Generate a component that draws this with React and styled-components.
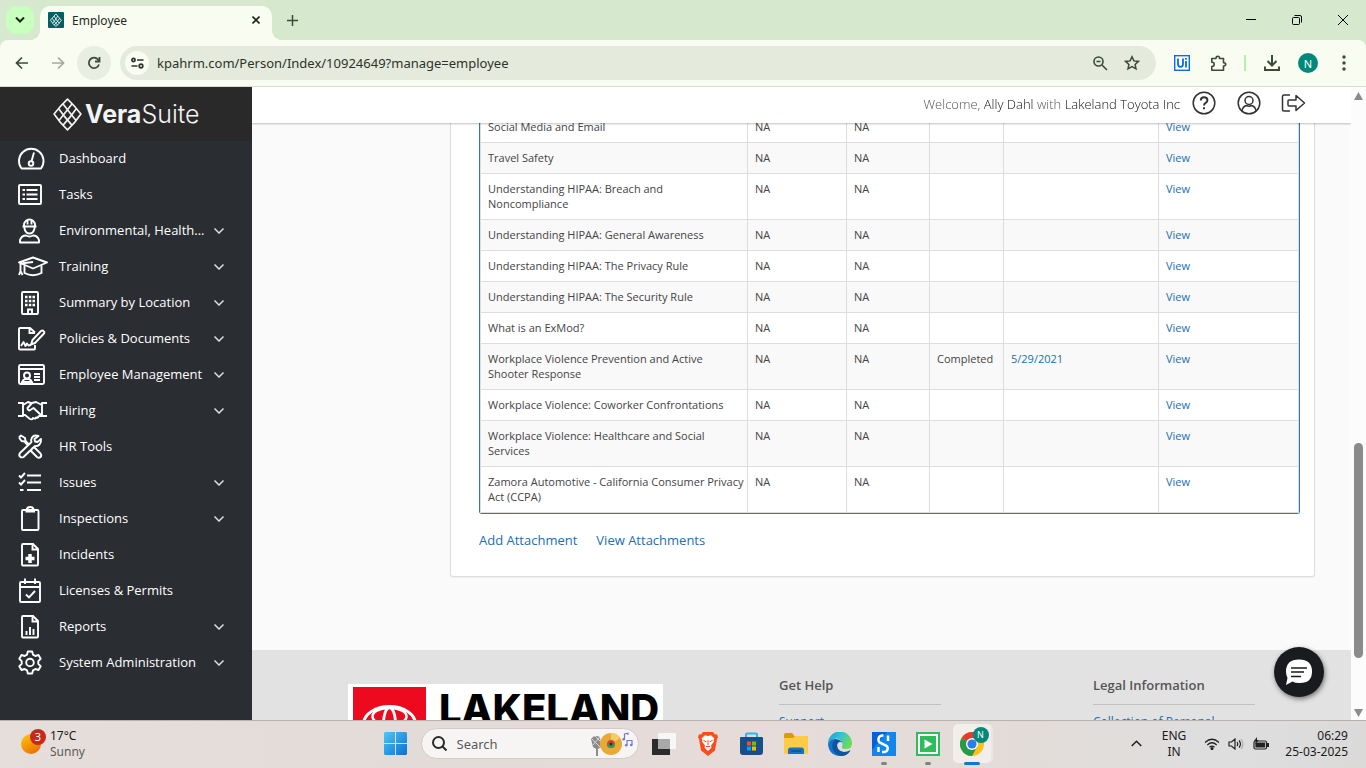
import React from "react";
import styled, { createGlobalStyle, css } from "styled-components";

const ui = '"Open Sans", "Noto Sans", sans-serif';
const system = '"Noto Sans", "Open Sans", sans-serif';

const GlobalStyle = createGlobalStyle`
  * { box-sizing: border-box; }
  body { margin: 0; font-family: ${ui}; }
  button, input { font: inherit; border: 0; padding: 0; margin: 0; background: none; color: inherit; }
  a { text-decoration: none; }
  svg { display: block; }
`;

const Screen = styled.div`
  height: 100vh;
  display: flex;
  flex-direction: column;
  overflow: hidden;
`;

/* ---------- browser chrome ---------- */

const TabStrip = styled.div`
  height: 40px;
  flex: none;
  display: flex;
  align-items: flex-start;
  padding-left: 6px;
  background: #d6e8ce;
  font-family: ${system};
`;

const TabSearch = styled.button`
  width: 28px;
  height: 28px;
  margin: 6px 6px 0 0;
  border-radius: 10px;
  background: #c9ffbf;
  display: grid;
  place-items: center;
`;

const Tab = styled.div`
  position: relative;
  width: 232px;
  height: 34px;
  margin-top: 6px;
  padding: 0 6px 6px 8px;
  border-radius: 10px 10px 0 0;
  background: #f8fcf1;
  display: flex;
  align-items: center;
  gap: 8px;
  font-size: 12px;
  color: #1f2a1c;
  &::before, &::after {
    content: "";
    position: absolute;
    bottom: 0;
    width: 10px;
    height: 10px;
  }
  &::before { left: -10px; background: radial-gradient(circle at 0 0, transparent 10px, #f8fcf1 10px); }
  &::after { right: -10px; background: radial-gradient(circle at 100% 0, transparent 10px, #f8fcf1 10px); }
`;

const TabTitle = styled.span`
  flex: 1;
`;

const StripButton = styled.button`
  width: 20px;
  height: 20px;
  display: grid;
  place-items: center;
`;

const NewTab = styled(StripButton)`
  width: 28px;
  height: 28px;
  margin: 6px auto 0 6px;
`;

const WindowButton = styled.button`
  width: 46px;
  height: 40px;
  display: grid;
  place-items: center;
`;

const ToolbarBack = styled.div`
  flex: none;
  background: #d6e8ce;
`;

const Toolbar = styled.div`
  height: 47px;
  padding: 0 4px;
  background: #f8fcf1;
  border-bottom: 1px solid #d3dfcc;
  border-radius: 8px 8px 0 0;
  display: flex;
  align-items: center;
`;

const ToolButton = styled.button`
  width: 36px;
  height: 36px;
  display: grid;
  place-items: center;
`;

const Reload = styled.span`
  width: 34px;
  height: 34px;
  border-radius: 50%;
  background: #e8eee2;
  display: grid;
  place-items: center;
`;

const AddressBar = styled.div`
  flex: 1;
  height: 34px;
  margin: 0 8px;
  padding: 0 8px 0 5px;
  border-radius: 17px;
  background: #e4ebdc;
  display: flex;
  align-items: center;
`;

const SiteInfo = styled.button`
  width: 24px;
  height: 24px;
  border-radius: 50%;
  background: #f8fcf1;
  display: grid;
  place-items: center;
  margin-right: 8px;
`;

const Address = styled.input`
  flex: 1;
  min-width: 0;
  height: 24px;
  font-family: ${system};
  font-size: 13px;
  color: #2c332a;
  outline: none;
`;

const FieldButton = styled.button`
  width: 32px;
  height: 28px;
  display: grid;
  place-items: center;
`;

const Divider = styled.span`
  width: 2px;
  height: 16px;
  margin: 0 8px;
  background: #b6f0ab;
`;

const Avatar = styled.span`
  width: ${(p) => p.$size}px;
  height: ${(p) => p.$size}px;
  border-radius: 50%;
  background: #00897b;
  color: #fff;
  font-family: ${system};
  font-size: ${(p) => (p.$size > 16 ? 11 : 9)}px;
  display: grid;
  place-items: center;
`;

/* ---------- site ---------- */

const Site = styled.div`
  flex: 1;
  min-height: 0;
  display: flex;
`;

const Sidebar = styled.aside`
  width: 252px;
  flex: none;
  background: #2a2d32;
  color: #fff;
  overflow: hidden;
`;

const Brand = styled.a`
  height: 54px;
  padding-left: 53px;
  background: #292929;
  color: #f4f4f4;
  display: flex;
  align-items: center;
  gap: 3px;
  font-family: Inter, sans-serif;
  font-size: 25px;
  font-weight: 300;
  strong { font-weight: 700; }
`;

const Nav = styled.nav`
  display: flex;
  flex-direction: column;
`;

const NavItem = styled.a`
  height: 36px;
  padding: 0 28px 2px 16px;
  display: flex;
  align-items: center;
  color: #fff;
  font-size: 13px;
  svg { flex: none; }
`;

const NavLabel = styled.span`
  flex: 1;
  padding-left: 11px;
  white-space: nowrap;
`;

const Main = styled.main`
  flex: 1;
  min-width: 0;
  overflow: hidden;
  background: #fafafa;
  position: relative;
`;

const TopBar = styled.header`
  position: sticky;
  top: 0;
  z-index: 1;
  height: 36px;
  padding-right: 45px;
  background: #fff;
  box-shadow: 0 1px 2px rgba(0, 0, 0, 0.25);
  display: flex;
  align-items: center;
  justify-content: flex-end;
  gap: 20px;
`;

const Welcome = styled.span`
  margin-right: -9px;
  padding-bottom: 2px;
  font-size: 13px;
  font-weight: 300;
  color: #555;
  b { font-weight: 300; color: #111; }
`;

const IconButton = styled.button`
  width: 25px;
  height: 28px;
  margin-bottom: 5px;
  display: grid;
  place-items: center;
`;

const Card = styled.section`
  margin: -12px 36px 0 198px;
  padding: 0 14px 26px 28px;
  background: #fff;
  border: 1px solid #ddd;
  border-top: 0;
  border-radius: 0 0 3px 3px;
  box-shadow: 0 1px 1px rgba(0, 0, 0, 0.05);
`;

const TableFrame = styled.div`
  border: 1px solid #3576ab;
  border-top: 0;
  border-radius: 0 0 3px 3px;
`;

const Table = styled.table`
  width: 100%;
  table-layout: fixed;
  border-collapse: collapse;
  font-size: 11px;
  line-height: 15px;
  color: #444;
  tr:nth-child(even) { background: #f9f9f9; }
`;

const Col = styled.col`
  width: ${(p) => (p.$w ? p.$w + "px" : "auto")};
`;

const Cell = styled.td`
  padding: 7px 2px 8px 7px;
  border: 1px solid #ddd;
  vertical-align: top;
`;

const Link = styled.a`
  color: #1a6fb5;
`;

const Attachments = styled.div`
  padding-top: 16px;
  display: flex;
  gap: 19px;
  font-size: 13px;
  line-height: 20px;
`;

const Footer = styled.footer`
  margin-top: 73px;
  padding: 25px 96px 0;
  height: 200px;
  background: #e2e2e2;
  display: flex;
  align-items: flex-start;
`;

const DealerLogo = styled.div`
  width: 315px;
  height: 90px;
  margin: 9px 116px 0 0;
  flex: none;
  padding: 3px 0 0 5px;
  background: #fff;
  display: flex;
  gap: 13px;
  overflow: hidden;
  font-family: Inter, sans-serif;
  font-size: 40px;
  line-height: 44px;
  font-weight: 800;
  color: #000;
`;

const FooterColumn = styled.div`
  width: 162px;
  flex: none;
  margin-right: 152px;
  font-size: 12px;
  line-height: 18px;
  white-space: nowrap;
  h2 {
    margin: 0 0 8px;
    padding-bottom: 9px;
    border-bottom: 1px solid #c1c1c1;
    font-size: 13px;
    line-height: 20px;
    font-weight: 600;
    color: #555;
  }
`;

const ChatButton = styled.button`
  position: absolute;
  right: 27px;
  bottom: 23px;
  width: 50px;
  height: 50px;
  border-radius: 50%;
  background: #1a1b1f;
  box-shadow: 1px 2px 5px rgba(0, 0, 0, 0.5);
  display: grid;
  place-items: center;
`;

const ScrollBar = styled.div`
  width: 15px;
  flex: none;
  padding: 5px 3px 3px;
  background: #fcfcfc;
  display: flex;
  flex-direction: column;
  justify-content: space-between;
`;

const Track = styled.div`
  flex: 1;
  display: grid;
  grid-template-rows: 343fr 215fr 51fr;
`;

const Thumb = styled.div`
  grid-row: 2;
  border-radius: 5px;
  background: #8b8b8b;
`;

/* ---------- taskbar ---------- */

const Taskbar = styled.div`
  height: 48px;
  flex: none;
  padding-bottom: 2px;
  border-top: 1px solid #b9b1ae;
  background: linear-gradient(90deg, #e6dedb, #e3dbd7 30%, #e6dbd9 55%, #e2dcd8 75%, #dededf 90%, #dbdad9);
  display: grid;
  grid-template-columns: 1fr auto 1fr;
  align-items: center;
  font-family: ${system};
  font-size: 12px;
  line-height: 16px;
  color: #1b1b1b;
`;

const Weather = styled.button`
  display: flex;
  align-items: center;
  gap: 3px;
  padding-left: 20px;
  text-align: left;
  em { display: block; font-style: normal; color: #5d5a58; }
`;

const Dock = styled.div`
  display: flex;
  align-items: center;
  padding-left: 1px;
`;

const AppButton = styled.button`
  position: relative;
  width: 44px;
  height: 45px;
  display: grid;
  place-items: center;
  ${(p) =>
    p.$state &&
    css`
      &::after {
        content: "";
        position: absolute;
        bottom: 1px;
        left: calc(50% - ${p.$state === "active" ? 8 : 3}px);
        width: ${p.$state === "active" ? 16 : 6}px;
        height: 3px;
        border-radius: 2px;
        background: ${p.$state === "active" ? "#0a78d4" : "#858080"};
      }
    `}
`;

const ActiveTile = styled.span`
  width: 38px;
  height: 39px;
  border-radius: 5px;
  background: #f2eeec;
  box-shadow: 2px 0 0 #ebe5e3;
  display: grid;
  place-items: center;
`;

const Badge = styled.span`
  position: absolute;
  top: 6px;
  right: 5px;
`;

const SearchBox = styled.label`
  width: 218px;
  height: 31px;
  margin: 0 3px;
  padding: 0 4px 0 10px;
  border-radius: 16px;
  background: #f7f5f4;
  border: 1px solid #d2cbc8;
  display: flex;
  align-items: center;
  gap: 10px;
`;

const SearchInput = styled.input`
  flex: 1;
  min-width: 0;
  font-size: 13px;
  outline: none;
  &::placeholder { color: #5c5a59; opacity: 1; }
`;

const Tray = styled.div`
  display: flex;
  align-items: center;
  justify-content: flex-end;
  padding-right: 18px;
`;

const TrayItem = styled.button`
  width: ${(p) => p.$w}px;
  text-align: ${(p) => p.$align || "center"};
  svg { margin: 0 auto; }
`;

/* ---------- drawings ---------- */

const Glyph = ({ w = 16, h, sw = 2, color = "#3c4a38", children, ...rest }) => (
  <svg width={w} height={h || w} viewBox={`0 0 ${w} ${h || w}`} fill="none" stroke={color} strokeWidth={sw} aria-hidden="true" {...rest}>
    {children}
  </svg>
);

const Lattice = ({ w, h, color, sw }) => (
  <svg width={w} height={h} viewBox="0 0 28 32" fill="none" stroke={color} strokeWidth={sw} strokeLinejoin="round" aria-hidden="true">
    <path d="M14 1Q20.500 7 27 15.500 21 24.500 14 31 7 24.500 1 15.500 7.500 7 14 1Z" />
    <path d="M9.500 5.500Q16 14 22.500 22M5.500 10.500Q11 18.500 18.500 26.500M18.500 5.500Q12 14 5.500 22M22.500 10.500Q17 18.500 9.500 26.500" />
  </svg>
);

const docShape = "M7 8h10l5 5v15.500q0 1-1 1H7q-1 0-1-1V9q0-1 1-1zM16.500 8v5.500H22";

const navIcons = {
  dashboard: (
    <>
      <path d="M5.500 28.500a12.300 12.300 0 1 1 19.500 0z" strokeLinejoin="round" />
      <path d="M18 12.500 15.600 21" />
      <circle cx="15" cy="23.500" r="2.300" />
    </>
  ),
  tasks: (
    <>
      <rect x="3" y="9" width="22" height="19" rx="1" />
      <path d="M6.500 14h2.500M6.500 18.500h2.500M6.500 23h2.500M10.500 14h11M10.500 18.500h11M10.500 23h11" />
    </>
  ),
  safety: (
    <>
      <path d="M8 14.500V13a5.500 5.500 0 0 1 11 0v1.500M6.500 14.500h14M8.500 15v1.500q1 5 5 5t5-5V15M11.500 8v4.500M15.500 8v4.500" />
      <path d="M4 30.500v-2.500q1.500-4.500 6-4.500 3.500 2 7 0 4.500 0 6 4.500v2.500z" strokeLinejoin="round" />
    </>
  ),
  training: (
    <>
      <path d="M3 14.500 17 9.500l14 5-14 6z" strokeLinejoin="round" />
      <path d="M8.500 17.500v7.500q8.500 4.500 17 0v-7.500M4.500 15.500 17 14M4.500 15.500v8M3 27l1.500-4 2 4" />
    </>
  ),
  building: (
    <>
      <rect x="6" y="8" width="16" height="22" rx="1" />
      <path d="M9 13h2.500M12.800 13h2.500M16.500 13h2.500M9 17h2.500M12.800 17h2.500M16.500 17h2.500M9 21h2.500M12.800 21h2.500M16.500 21h2.500" strokeWidth="2.500" />
      <path d="M12 30v-4.500h4V30" />
    </>
  ),
  policy: (
    <>
      <path d="M19 12.500 14 8H4q-1 0-1 1v19.500q0 1 1 1h14q1 0 1-1V25M13.500 8v5H19" />
      <path d="M5 26l2.500-4 2 4 1.500-2.500 1.500 2 2.500-.5M15 24.500l1.500-4.500L25 11q1.500-1 2.800.3t-.3 2.700L19 23z" strokeLinejoin="round" />
    </>
  ),
  idcard: (
    <>
      <rect x="3" y="9" width="25" height="19" rx="1.500" />
      <path d="M3 13h25M18 18h6M18 21h6M18 24h6M6 26q1-2.500 3.500-3h3q2.500.5 3.500 3z" />
      <circle cx="11" cy="19.500" r="3" />
    </>
  ),
  hiring: (
    <path
      d="M2 11h5v13H2M31 11h-5v13h5M7 13l5-3 4 1.500M26 13l-6-3-4 1-4.500 5q0 2 2 2.500l4-2.500 7.500 7M7 23h2l5 4q2 1 3-1 2 1.500 3-.5 2 .8 3-1.500h3"
      strokeLinejoin="round"
    />
  ),
  tools: (
    <path
      d="M3 9.500 5 7.500l4 2.500.5 3 4 4M3 9.500 5.500 13l3 .5 3.500 4M16.500 20l2-.5 6 6q1.500 2 0 3.500t-3.500 0l-6-6zM22.500 8q-4.500-1.500-6.500 1.500-1.500 2.500-.5 4.500L4 25q-1.500 2 0 3.500t3.500.5L19 18q2.500.5 4.500-1.500T25 11l-3.500 3-2.500-.5-.5-2.500z"
      strokeLinejoin="round"
    />
  ),
  issues: <path d="M3 11.500l2 2L9 9M3 18.500l2 2L9 16M11 11.500h14M11 18.500h14M11 26h14M4 26h3.500" />,
  clipboard: (
    <>
      <rect x="6" y="10" width="16.500" height="20" rx="1" />
      <path d="M9.500 11.500h9.500M11 10q0-3 3.200-3t3.200 3" strokeWidth="2.200" />
    </>
  ),
  incident: (
    <>
      <path d={docShape} />
      <path d="M14 18v9M9.500 22.500h9" strokeWidth="3.500" />
    </>
  ),
  license: (
    <>
      <rect x="4" y="10" width="20" height="20" rx="1" />
      <path d="M4 15h20M9 6.500V12M19 6.500V12M10 22.500l3 3 6-6.500" />
    </>
  ),
  report: (
    <>
      <path d={docShape} />
      <path d="M10.500 27v-4M14 27v-8M17.500 27v-6" />
    </>
  ),
  gear: (
    <>
      <path
        d="M11.800 7.500h4.400l.8 3.200 2.300 1.300 3.200-1 2.200 3.800-2.400 2.300v2.800l2.400 2.300-2.200 3.800-3.200-1-2.300 1.300-.8 3.200h-4.400l-.8-3.200-2.300-1.300-3.200 1-2.200-3.800 2.400-2.300v-2.800l-2.400-2.300L5.500 11l3.200 1L11 10.700z"
        strokeLinejoin="round"
      />
      <circle cx="14" cy="18.500" r="3.800" />
    </>
  ),
};

const NavIcon = ({ name }) => (
  <Glyph w={32} h={36} sw={1.900} color="#fff">
    {navIcons[name]}
  </Glyph>
);

const Chevron = () => (
  <Glyph w={10} h={7} sw={1.500} color="#dfe0e2">
    <path d="M.5 1.500 5 6 9.500 1.500" />
  </Glyph>
);

const StartIcon = () => (
  <svg width="23" height="23" viewBox="0 0 23 23" aria-hidden="true">
    <defs>
      <linearGradient id="start" x1="0" y1="0" x2="1" y2="1">
        <stop offset="0" stopColor="#4bc8f8" />
        <stop offset="1" stopColor="#0a6fd0" />
      </linearGradient>
    </defs>
    <path fill="url(#start)" d="M1 0h10v11H0V1zM12 0h10l1 1v10H12zM0 12h11v11H1l-1-1zM12 12h11v10l-1 1H12z" />
  </svg>
);

const MusicArt = () => (
  <svg width="44" height="26" viewBox="0 0 44 26" aria-hidden="true">
    <path d="M1 8q3-5 9-2l1 10-3 2v7H6v-7l-3-2z" fill="#8b8b8b" />
    <path d="M2 8l8 8M10 6l-7 8M5 5l6 6" stroke="#d7d7d7" />
    <circle cx="21" cy="13" r="11" fill="#e8aa35" />
    <path d="M21 2a11 11 0 0 1 9 5l-9 6z" fill="#f6cc69" />
    <circle cx="21" cy="13" r="4" fill="#d2453a" />
    <path d="M17 13a4 4 0 0 0 8 0z" fill="#2f9b63" />
    <circle cx="21" cy="13" r="1.500" fill="#3f2914" />
    <path d="M34.500 8V3l3.500-.8V4M37 14V9.500h5V14" fill="none" stroke="#7675d4" strokeWidth="1.200" />
    <circle cx="33.700" cy="8.300" r="1.300" fill="#7675d4" />
    <circle cx="36.200" cy="14.200" r="1.300" fill="#7675d4" />
    <circle cx="41.200" cy="14" r="1.300" fill="#7675d4" />
  </svg>
);

const TaskViewIcon = () => (
  <svg width="24" height="24" viewBox="0 0 24 24" aria-hidden="true">
    <rect x="0" y="7" width="18" height="16" fill="#2c2c2c" />
    <rect x="6" y="1" width="18" height="16" rx="1" fill="#f7f7f7" />
    <path d="M6 7h12v10H6z" fill="#a9a9a9" />
  </svg>
);

const BraveIcon = () => (
  <svg width="20" height="24" viewBox="0 0 20 24" aria-hidden="true">
    <path d="M5 0h10l2 2.500 2-.3 1 3-1 1.800-2 11.500L10 24l-7-5.500L1 7 0 5.200l1-3 2 .3z" fill="#fb4c1c" />
    <path d="M10 4l3-.8 3.500 3.300-1 1.500.5 1.500-3 4 .5 2-3.500 3.500-3.500-3.500.5-2-3-4 .5-1.500-1-1.500L7 3.200z" fill="#fff" />
    <path d="M5.500 8.500l3 1.300M14.500 8.500l-3 1.300M10 8v5M8 14.500h4" stroke="#fb4c1c" strokeWidth="1" />
  </svg>
);

const StoreIcon = () => (
  <svg width="23" height="24" viewBox="0 0 23 24" aria-hidden="true">
    <path d="M6 6V2.500Q6 1.500 7 1.500h9q1 0 1 1V6" fill="none" stroke="#2cb5ef" strokeWidth="2" />
    <path d="M1 5h21q1 0 1 1v14q0 3-3 3H3q-3 0-3-3V6q0-1 1-1z" fill="#174f8c" />
    <path d="M7 9.500h4v4H7z" fill="#f25022" />
    <path d="M12 9.500h4v4h-4z" fill="#7fba00" />
    <path d="M7 14.500h4v4H7z" fill="#00a4ef" />
    <path d="M12 14.500h4v4h-4z" fill="#ffb900" />
  </svg>
);

const FolderIcon = () => (
  <svg width="24" height="22" viewBox="0 0 24 22" aria-hidden="true">
    <path d="M0 2q0-2 2-2h6l2.500 3H24v17H0z" fill="#dd9a0a" />
    <path d="M0 5h9l2-2h12q1 0 1 1v15q0 2-2 2H2q-2 0-2-2z" fill="#fdcb45" />
    <path d="M4 21v-4q0-2.500 2.500-2.500h11Q20 14.500 20 17v4z" fill="#1275c4" />
    <path d="M7 18h10" stroke="#0c4f8d" strokeWidth="1.500" />
  </svg>
);

const EdgeIcon = () => (
  <svg width="24" height="24" viewBox="0 0 24 24" aria-hidden="true">
    <defs>
      <linearGradient id="edgeTop" x1="0" y1="0" x2="1" y2="0.500">
        <stop offset="0" stopColor="#1b97d8" />
        <stop offset="0.500" stopColor="#35c1d8" />
        <stop offset="1" stopColor="#6ddc54" />
      </linearGradient>
    </defs>
    <path d="M0 12A12 12 0 0 1 24 11q0 6-6 6-5 0-4-2.500 1-2 0-4.500Q11 5 5.500 7 1.500 8.500 0 12z" fill="url(#edgeTop)" />
    <path d="M0 12q2-5 7-5 5.500 0 7.500 3.500Q10 9 9 13q0 6 7 7 3.500 0 6.500-2Q19 24 12 24 1 23.500 0 12z" fill="#1173cb" />
    <path d="M7 7.500q-4 4-2 10 2 5 8 6.500 6 0 9.500-5.500Q19 20.500 15 20q-6-1.500-6-7 .3-3 3-4Q10 7 7 7.500z" fill="#0c559f" />
  </svg>
);

const SearchAppIcon = () => (
  <svg width="24" height="24" viewBox="0 0 24 24" aria-hidden="true">
    <path d="M0 0h24v24H0z" fill="#1186ec" />
    <path d="M0 0h15L0 18z" fill="#0560da" />
    <path d="M11.500 3.500H10A4 4 0 0 0 8.500 11l5.500 2.500a3.500 3.500 0 0 1-1.500 6.500H10" fill="none" stroke="#fff" strokeWidth="2.500" />
    <path d="M16 3.500v5.500M6.500 15v5" stroke="#fff" strokeWidth="2.500" />
  </svg>
);

const PlayAppIcon = () => (
  <svg width="24" height="24" viewBox="0 0 24 24" aria-hidden="true">
    <path d="M0 0h24v24H0z" fill="#2fbd5c" />
    <path d="M3 3h18v18H3z" fill="none" stroke="#fff" strokeWidth="2" />
    <path d="M8.500 7.500v9l8-4.500z" fill="#fff" />
  </svg>
);

const ChromeIcon = () => (
  <svg width="24" height="24" viewBox="0 0 24 24" aria-hidden="true">
    <circle cx="12" cy="12" r="12" fill="#fbc116" />
    <path d="M12 12 1.600 6A12 12 0 0 1 22.400 6L12 6.500z" fill="#e33b2e" />
    <path d="M12 12 1.600 6A12 12 0 0 0 12 24l5-9z" fill="#269a48" />
    <circle cx="12" cy="12" r="6" fill="#fff" />
    <circle cx="12" cy="12" r="4.600" fill="#2b7de9" />
  </svg>
);

const DealerMark = () => (
  <svg width="73" height="73" viewBox="0 0 73 73" aria-hidden="true">
    <path d="M0 0h73v73H0z" fill="#ee0a1e" />
    <g fill="none" stroke="#fff">
      <ellipse cx="36.500" cy="37" rx="26" ry="17.500" strokeWidth="3" />
      <ellipse cx="36.500" cy="37" rx="6" ry="16.500" strokeWidth="2.800" />
      <ellipse cx="36.500" cy="29.500" rx="17" ry="8.500" strokeWidth="2.500" />
    </g>
  </svg>
);

/* ---------- content ---------- */

const menu = [
  ["dashboard", "Dashboard", false],
  ["tasks", "Tasks", false],
  ["safety", "Environmental, Health...", true],
  ["training", "Training", true],
  ["building", "Summary by Location", true],
  ["policy", "Policies & Documents", true],
  ["idcard", "Employee Management", true],
  ["hiring", "Hiring", true],
  ["tools", "HR Tools", false],
  ["issues", "Issues", true],
  ["clipboard", "Inspections", true],
  ["incident", "Incidents", false],
  ["license", "Licenses & Permits", false],
  ["report", "Reports", true],
  ["gear", "System Administration", true],
];

const courses = [
  { name: "Social Media and Email" },
  { name: "Travel Safety" },
  { name: "Understanding HIPAA: Breach and Noncompliance" },
  { name: "Understanding HIPAA: General Awareness" },
  { name: "Understanding HIPAA: The Privacy Rule" },
  { name: "Understanding HIPAA: The Security Rule" },
  { name: "What is an ExMod?" },
  { name: "Workplace Violence Prevention and Active Shooter Response", status: "Completed", date: "5/29/2021" },
  { name: "Workplace Violence: Coworker Confrontations" },
  { name: "Workplace Violence: Healthcare and Social Services" },
  { name: "Zamora Automotive - California Consumer Privacy Act (CCPA)" },
];

function BrowserChrome() {
  return (
    <>
      <TabStrip>
        <TabSearch aria-label="Search tabs">
          <Glyph w={10} h={6} color="#1b2a18"><path d="M1 .5l4 4 4-4" /></Glyph>
        </TabSearch>
        <Tab>
          <svg width="16" height="16" viewBox="0 0 16 16" aria-hidden="true">
            <rect width="16" height="16" rx="1" fill="#055e63" />
            <g transform="translate(2 1.500) scale(.42)" fill="none" stroke="#e5f2f1" strokeWidth="2.200">
              <path d="M14 1 27 16Q21 25 14 31 7 25 1 16zM9.500 6Q15 16 22 23.500M5 11q5 9 13 16.500M18.500 6Q13 16 6 23.500M23 11q-5 9-13 16.500" />
            </g>
          </svg>
          <TabTitle>Employee</TabTitle>
          <StripButton aria-label="Close tab">
            <Glyph w={8} sw={1.600} color="#1f2a1c"><path d="M.5.5l7 7M7.500.5l-7 7" /></Glyph>
          </StripButton>
        </Tab>
        <NewTab aria-label="New tab">
          <Glyph w={11} sw={1.500}><path d="M5.500 0v11M0 5.500h11" /></Glyph>
        </NewTab>
        <WindowButton aria-label="Minimize">
          <Glyph w={10} sw={1} color="#000"><path d="M0 4.500h10" /></Glyph>
        </WindowButton>
        <WindowButton aria-label="Restore">
          <Glyph w={10} sw={1} color="#000">
            <rect x=".5" y="2.500" width="7" height="7" rx="1" />
            <path d="M2.500.5H8Q9.500.5 9.500 2v5.500" />
          </Glyph>
        </WindowButton>
        <WindowButton aria-label="Close">
          <Glyph w={10} sw={1} color="#000"><path d="M0 0l10 10M10 0 0 10" /></Glyph>
        </WindowButton>
      </TabStrip>
      <ToolbarBack>
        <Toolbar>
          <ToolButton aria-label="Back">
            <Glyph w={14} sw={1.700}><path d="M13 7H1.500M7 1.500 1.500 7 7 12.500" /></Glyph>
          </ToolButton>
          <ToolButton aria-label="Forward">
            <Glyph w={14} sw={1.700} color="#a3aa9e"><path d="M1 7h11.500M7 1.500 12.500 7 7 12.500" /></Glyph>
          </ToolButton>
          <ToolButton aria-label="Reload">
            <Reload>
              <Glyph w={14} sw={1.800}><path d="M12 8.500A5.200 5.200 0 1 1 11 3.500l1.500 1.500M12.500 1v4.500H8" /></Glyph>
            </Reload>
          </ToolButton>
          <AddressBar>
            <SiteInfo aria-label="View site information">
              <Glyph w={13} h={12} sw={1.700} color="#2a3428">
                <circle cx="2.500" cy="3" r="1.600" />
                <circle cx="10" cy="9" r="1.800" />
                <path d="M6 3h6.500M.5 9h6" />
              </Glyph>
            </SiteInfo>
            <Address aria-label="Address" defaultValue="kpahrm.com/Person/Index/10924649?manage=employee" />
            <FieldButton aria-label="Zoom">
              <Glyph w={15} sw={1.600}>
                <circle cx="5.500" cy="5.500" r="4.500" />
                <path d="M9 9l5 5M3.500 5.500h4" />
              </Glyph>
            </FieldButton>
            <FieldButton aria-label="Bookmark this tab">
              <Glyph w={16} sw={1.500}>
                <path d="M8 1.800l1.900 4.100 4.500.5-3.300 3 .9 4.500L8 11.700l-4 2.200.9-4.500-3.300-3 4.500-.5z" />
              </Glyph>
            </FieldButton>
          </AddressBar>
          <ToolButton aria-label="UiPath extension">
            <svg width="16" height="16" viewBox="0 0 16 16" fill="none" stroke="#0a6be6" aria-hidden="true">
              <rect x=".7" y=".7" width="14.600" height="14.600" fill="#fff" strokeWidth="1.400" />
              <path d="M4 3.500V9q0 2.800 2.500 2.800T9 9V3.500M12 6v6.500M12 3v1.700" strokeWidth="1.800" />
            </svg>
          </ToolButton>
          <ToolButton aria-label="Extensions">
            <Glyph w={17} h={17} sw={1.600}>
              <path d="M1.800 3.500H6q0-2.300 1.800-2.300T9.500 3.500h4v4.200q2.200 0 2.200 1.600t-2.200 1.700v4.200H1.800V11.500Q4.200 11.500 4.200 9.300T1.800 7.200z" strokeLinejoin="round" />
            </Glyph>
          </ToolButton>
          <Divider />
          <ToolButton aria-label="Downloads">
            <Glyph w={16}><path d="M8 0v10M3.500 6 8 10.500 12.500 6M1 11.500V15h14v-3.500" /></Glyph>
          </ToolButton>
          <ToolButton aria-label="Profile"><Avatar $size={20}>N</Avatar></ToolButton>
          <ToolButton aria-label="Menu">
            <svg width="4" height="16" viewBox="0 0 4 16" fill="#3c4a38" aria-hidden="true">
              <circle cx="2" cy="2" r="1.700" />
              <circle cx="2" cy="8" r="1.700" />
              <circle cx="2" cy="14" r="1.700" />
            </svg>
          </ToolButton>
        </Toolbar>
      </ToolbarBack>
    </>
  );
}

function SideMenu() {
  return (
    <Sidebar>
      <Brand href="#">
        <Lattice w={29} h={33} color="#f4f4f4" sw={1.600} />
        <span><strong>Vera</strong>Suite</span>
      </Brand>
      <Nav>
        {menu.map(([icon, label, expands]) => (
          <NavItem href="#" key={label}>
            <NavIcon name={icon} />
            <NavLabel>{label}</NavLabel>
            {expands && <Chevron />}
          </NavItem>
        ))}
      </Nav>
    </Sidebar>
  );
}

function Page() {
  return (
    <Main>
      <TopBar>
        <Welcome>Welcome, <b>Ally Dahl</b> with <b>Lakeland Toyota Inc</b></Welcome>
        <IconButton aria-label="Help">
          <Glyph w={24} sw={1.500} color="#333">
            <circle cx="12" cy="12" r="10.800" />
            <path d="M8.800 9.500q0-3.300 3.300-3.300t3.300 3q0 1.600-1.700 2.600T12 14.500M12 16.200v2" strokeWidth="2" />
          </Glyph>
        </IconButton>
        <IconButton aria-label="Account">
          <Glyph w={24} sw={1.500} color="#333">
            <circle cx="12" cy="12" r="10.800" />
            <circle cx="12" cy="9.500" r="4" />
            <path d="M5 20q.5-4.500 4.500-5.500 2.500 1.300 5 0 4 1 4.500 5.500" />
          </Glyph>
        </IconButton>
        <IconButton aria-label="Log out">
          <Glyph w={25} h={20} sw={1.500} color="#333">
            <path d="M9 2H3Q1.500 2 1.500 3.500v13Q1.500 18 3 18h6M8 7h7V2.500L23.500 10 15 17.500V13H8q-1 0-1-1V8q0-1 1-1z" strokeLinejoin="round" />
          </Glyph>
        </IconButton>
      </TopBar>
      <Card>
        <TableFrame>
          <Table>
            <colgroup>
              <Col />
              <Col $w={99} />
              <Col $w={83} />
              <Col $w={74} />
              <Col $w={155} />
              <Col $w={140} />
            </colgroup>
            <tbody>
              {courses.map((c) => (
                <tr key={c.name}>
                  <Cell>{c.name}</Cell>
                  <Cell>NA</Cell>
                  <Cell>NA</Cell>
                  <Cell>{c.status}</Cell>
                  <Cell>{c.date && <Link href="#">{c.date}</Link>}</Cell>
                  <Cell><Link href="#">View</Link></Cell>
                </tr>
              ))}
            </tbody>
          </Table>
        </TableFrame>
        <Attachments>
          <Link href="#">Add Attachment</Link>
          <Link href="#">View Attachments</Link>
        </Attachments>
      </Card>
      <Footer>
        <DealerLogo><DealerMark /><span>LAKELAND</span></DealerLogo>
        <FooterColumn>
          <h2>Get Help</h2>
          <Link href="#">Support</Link>
        </FooterColumn>
        <FooterColumn>
          <h2>Legal Information</h2>
          <Link href="#">Collection of Personal</Link>
        </FooterColumn>
      </Footer>
      <ChatButton aria-label="Open chat">
        <svg width="28" height="28" viewBox="0 0 28 28" aria-hidden="true">
          <path d="M14 1.500q13 0 13 12T14 25q-4 0-6.500-1.500L1 27l1.500-7Q1 17 1 13.500q0-12 13-12z" fill="#fff" />
          <path d="M6 10h16M6 14h13M6 18.500h10" stroke="#1a1b1f" strokeWidth="1.700" />
        </svg>
      </ChatButton>
    </Main>
  );
}

function DesktopBar() {
  return (
    <Taskbar>
      <Weather>
        <svg width="27" height="30" viewBox="0 0 27 30" aria-hidden="true">
          <defs>
            <linearGradient id="sun" x1="0.200" y1="0" x2="0.800" y2="1">
              <stop offset="0" stopColor="#fcc30e" />
              <stop offset="1" stopColor="#ea6a05" />
            </linearGradient>
          </defs>
          <circle cx="11" cy="15" r="10" fill="url(#sun)" />
          <circle cx="18" cy="8" r="8" fill="#c62a1d" />
          <text x="18" y="12" textAnchor="middle" fontSize="11" fill="#fff">3</text>
        </svg>
        <span>17°C<em>Sunny</em></span>
      </Weather>
      <Dock>
        <AppButton aria-label="Start"><StartIcon /></AppButton>
        <SearchBox>
          <Glyph w={15} color="#2b2b2b"><circle cx="6.500" cy="6.500" r="5.500" /><path d="M10.500 10.500l4 4" /></Glyph>
          <SearchInput aria-label="Search" placeholder="Search" />
          <MusicArt />
        </SearchBox>
        <AppButton aria-label="Task view"><TaskViewIcon /></AppButton>
        <AppButton aria-label="Brave"><BraveIcon /></AppButton>
        <AppButton aria-label="Microsoft Store"><StoreIcon /></AppButton>
        <AppButton aria-label="File Explorer"><FolderIcon /></AppButton>
        <AppButton aria-label="Edge"><EdgeIcon /></AppButton>
        <AppButton aria-label="Sync app" $state="open"><SearchAppIcon /></AppButton>
        <AppButton aria-label="Player" $state="open"><PlayAppIcon /></AppButton>
        <AppButton aria-label="Chrome" $state="active">
          <ActiveTile><ChromeIcon /></ActiveTile>
          <Badge><Avatar $size={16}>N</Avatar></Badge>
        </AppButton>
      </Dock>
      <Tray>
        <TrayItem $w={26} aria-label="Hidden icons">
          <Glyph w={11} h={7} sw={1.500} color="#222"><path d="M.7 6 5.500 1.200 10.300 6" /></Glyph>
        </TrayItem>
        <TrayItem $w={50}>ENG<br />IN</TrayItem>
        <TrayItem $w={26} aria-label="Network">
          <Glyph w={16} h={12} sw={1.200} color="#222">
            <path d="M1 4.500q7-6.500 14 0M3.300 7q4.700-4.500 9.400 0M5.500 9.300q2.500-2.400 5 0" />
            <circle cx="8" cy="10.500" r="1" fill="#222" />
          </Glyph>
        </TrayItem>
        <TrayItem $w={22} aria-label="Volume">
          <Glyph w={16} h={12} sw={1.200} color="#222">
            <path d="M1 4h2.500L7 1v10L3.500 8H1zM9 4q1.500 2 0 4M11 2.500q3 3.500 0 7" />
            <path d="M13 1q4 5 0 10" stroke="#aaa" />
          </Glyph>
        </TrayItem>
        <TrayItem $w={28} aria-label="Battery">
          <Glyph w={16} h={13} sw={1.200} color="#222">
            <rect x="1" y="4" width="12.500" height="8" rx="1.500" />
            <path d="M3 6h8.500v4H3zM14 6.500h1.500v3H14z" fill="#222" />
            <path d="M4 0 1 4h2L2 7.500 6 3H4z" fill="#222" stroke="none" />
          </Glyph>
        </TrayItem>
        <TrayItem $w={73} $align="right">06:29<br />25-03-2025</TrayItem>
      </Tray>
    </Taskbar>
  );
}

export default function App() {
  return (
    <Screen>
      <GlobalStyle />
      <BrowserChrome />
      <Site>
        <SideMenu />
        <Page />
        <ScrollBar>
          <Glyph w={9} h={8} stroke="none"><path d="M4.500 0 9 8H0z" fill="#8b8b8b" /></Glyph>
          <Track><Thumb /></Track>
          <Glyph w={9} h={8} stroke="none"><path d="M0 0h9L4.500 8z" fill="#8b8b8b" /></Glyph>
        </ScrollBar>
      </Site>
      <DesktopBar />
    </Screen>
  );
}
